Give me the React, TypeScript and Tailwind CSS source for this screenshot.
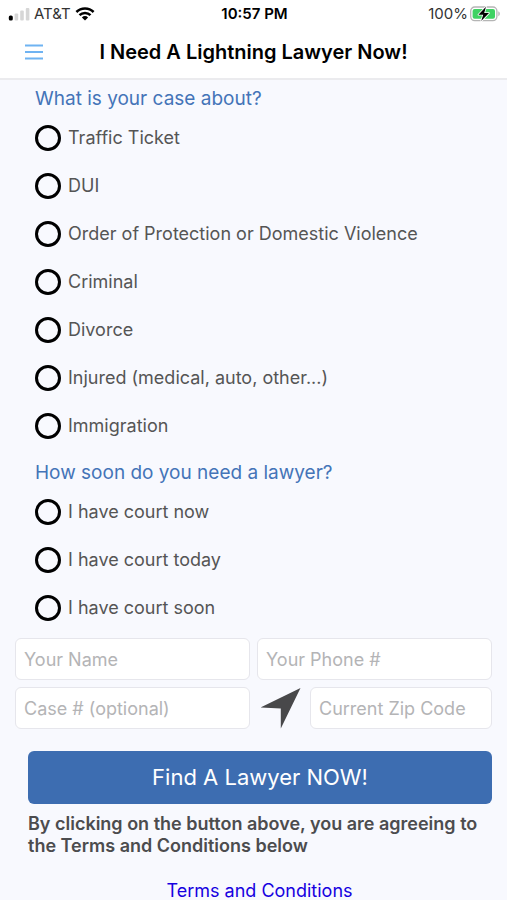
import { useState } from 'react'
import type { FC, ReactNode } from 'react'

const caseTypes = [
  'Traffic Ticket',
  'DUI',
  'Order of Protection or Domestic Violence',
  'Criminal',
  'Divorce',
  'Injured (medical, auto, other...)',
  'Immigration',
]

const courtDates = ['I have court now', 'I have court today', 'I have court soon']

const SignalIcon = () => (
  <svg width="22" height="14" viewBox="0 0 22 14" aria-hidden="true">
    <rect x="0.8" y="8.5" width="4" height="5" rx="1.6" fill="#000" />
    <rect x="6.6" y="6.5" width="3.6" height="7" rx="1" fill="#d6d6d6" />
    <rect x="12.2" y="3.5" width="3.6" height="10" rx="1" fill="#d6d6d6" />
    <rect x="17.8" y="1" width="3.6" height="12.5" rx="1" fill="#d6d6d6" />
  </svg>
)

const WifiIcon = () => (
  <svg width="20" height="14" viewBox="0 0 20 14" aria-hidden="true">
    <g fill="none" stroke="#000" strokeWidth="2.5">
      <path d="M1.4 5a12.2 12.2 0 0 1 17.200 0" />
      <path d="M4.500 8.200a7.800 7.800 0 0 1 11 0" />
    </g>
    <path d="M10 13.500 6.900 10.400a4.400 4.400 0 0 1 6.200 0Z" fill="#000" />
  </svg>
)

const BatteryIcon = () => (
  <svg width="31" height="16" viewBox="0 0 31 16" aria-hidden="true">
    <rect x="0.7" y="1" width="26.2" height="13.6" rx="4" fill="#fff" stroke="#b5b5b5" strokeWidth="1.3" />
    <rect x="2.6" y="2.9" width="22.4" height="9.8" rx="2" fill="#3fd263" />
    <path d="M28.3 5.3c2 .8 2 4.2 0 5Z" fill="#b5b5b5" />
    <path
      d="M16 .8 8.4 8.7h4.8l-2 6.4 7.8-8h-4.8Z"
      fill="#000"
      stroke="#fff"
      strokeWidth="1.6"
      paintOrder="stroke"
      strokeLinejoin="round"
    />
  </svg>
)

const StatusBar = () => (
  <div className="grid h-7 grid-cols-3 items-center pl-2 pr-1.5 text-[15px] leading-5">
    <div className="flex items-center gap-1 text-[#333]">
      <SignalIcon />
      <span>AT&amp;T</span>
      <WifiIcon />
    </div>
    <span className="text-center font-semibold">10:57 PM</span>
    <div className="flex items-center justify-end gap-0.5 text-[#333]">
      <span>100%</span>
      <BatteryIcon />
    </div>
  </div>
)

const Header = () => (
  <header className="border-b-2 border-[#ebebee] bg-white text-black">
    <StatusBar />
    <div className="grid h-[50px] grid-cols-[48px_1fr_48px] items-center pb-0.5">
      <button type="button" aria-label="Menu" className="flex justify-end pr-[5px]">
        <svg width="18" height="16" viewBox="0 0 18 16" aria-hidden="true">
          <path d="M0 1.500h18M0 8h18M0 14.500h18" stroke="#6fb3f2" strokeWidth="2" />
        </svg>
      </button>
      <h1 className="text-center text-xl leading-6 font-semibold">I Need A Lightning Lawyer Now!</h1>
    </div>
  </header>
)

const RadioGroup: FC<{ name: string; legend: string; options: string[] }> = ({ name, legend, options }) => {
  const [selected, setSelected] = useState('')

  return (
    <fieldset className="px-[35px]">
      <legend className="pb-[3px] text-[19px] leading-6 text-[#4474b8]">{legend}</legend>
      {options.map((option) => (
        <label key={option} className="flex h-12 items-center gap-[7px]">
          <input
            type="radio"
            name={name}
            value={option}
            checked={selected === option}
            onChange={() => setSelected(option)}
            className="size-[26px] shrink-0 appearance-none rounded-full border-[3px] border-black checked:bg-[#3d6db1]"
          />
          <span className="text-lg leading-6 text-[#555]">{option}</span>
        </label>
      ))}
    </fieldset>
  )
}

const TextField: FC<{ label: string; type?: string }> = ({ label, type = 'text' }) => (
  <input
    type={type}
    aria-label={label}
    placeholder={label}
    className="h-[42px] w-full min-w-0 rounded-md border border-[#e6e6ec] bg-white px-2 text-lg text-[#444] placeholder:text-[#b4b4b6]"
  />
)

const Row: FC<{ children: ReactNode }> = ({ children }) => (
  <div className="grid grid-cols-2 gap-[7px]">{children}</div>
)

export default function App() {
  return (
    <div className="min-h-screen bg-[#f8f9fe] font-['Inter',sans-serif]">
      <Header />
      <form onSubmit={(e) => e.preventDefault()} className="pt-[7px]">
        <div className="flex flex-col gap-[11px]">
          <RadioGroup name="case" legend="What is your case about?" options={caseTypes} />
          <RadioGroup name="court" legend="How soon do you need a lawyer?" options={courtDates} />
        </div>

        <div className="flex flex-col gap-[7px] px-[15px] pt-1.5">
          <Row>
            <TextField label="Your Name" />
            <TextField label="Your Phone #" type="tel" />
          </Row>
          <Row>
            <TextField label="Case # (optional)" />
            <div className="flex items-center gap-2">
              <button type="button" aria-label="Use my location" className="shrink-0 pl-1">
                <svg width="41" height="42" viewBox="0 0 41 42" aria-hidden="true">
                  <path d="M39.500 1 19.800 41.500V21.500L-.5 20.500Z" fill="#48484a" />
                </svg>
              </button>
              <TextField label="Current Zip Code" />
            </div>
          </Row>
        </div>

        <div className="pr-[15px] pl-7 pt-[22px]">
          <button type="submit" className="h-[53px] w-full rounded-md bg-[#3d6db1] text-[22px] text-white">
            Find A Lawyer NOW!
          </button>
          <p className="pt-[9px] text-lg leading-[22px] font-semibold text-[#4c4c4e]">
            By clicking on the button above, you are agreeing to the Terms and Conditions below
          </p>
        </div>
        <div className="pt-6 pl-3 text-center text-lg leading-5">
          <a href="#terms" className="text-[#1600e0]">
            Terms and Conditions
          </a>
        </div>
      </form>
    </div>
  )
}
